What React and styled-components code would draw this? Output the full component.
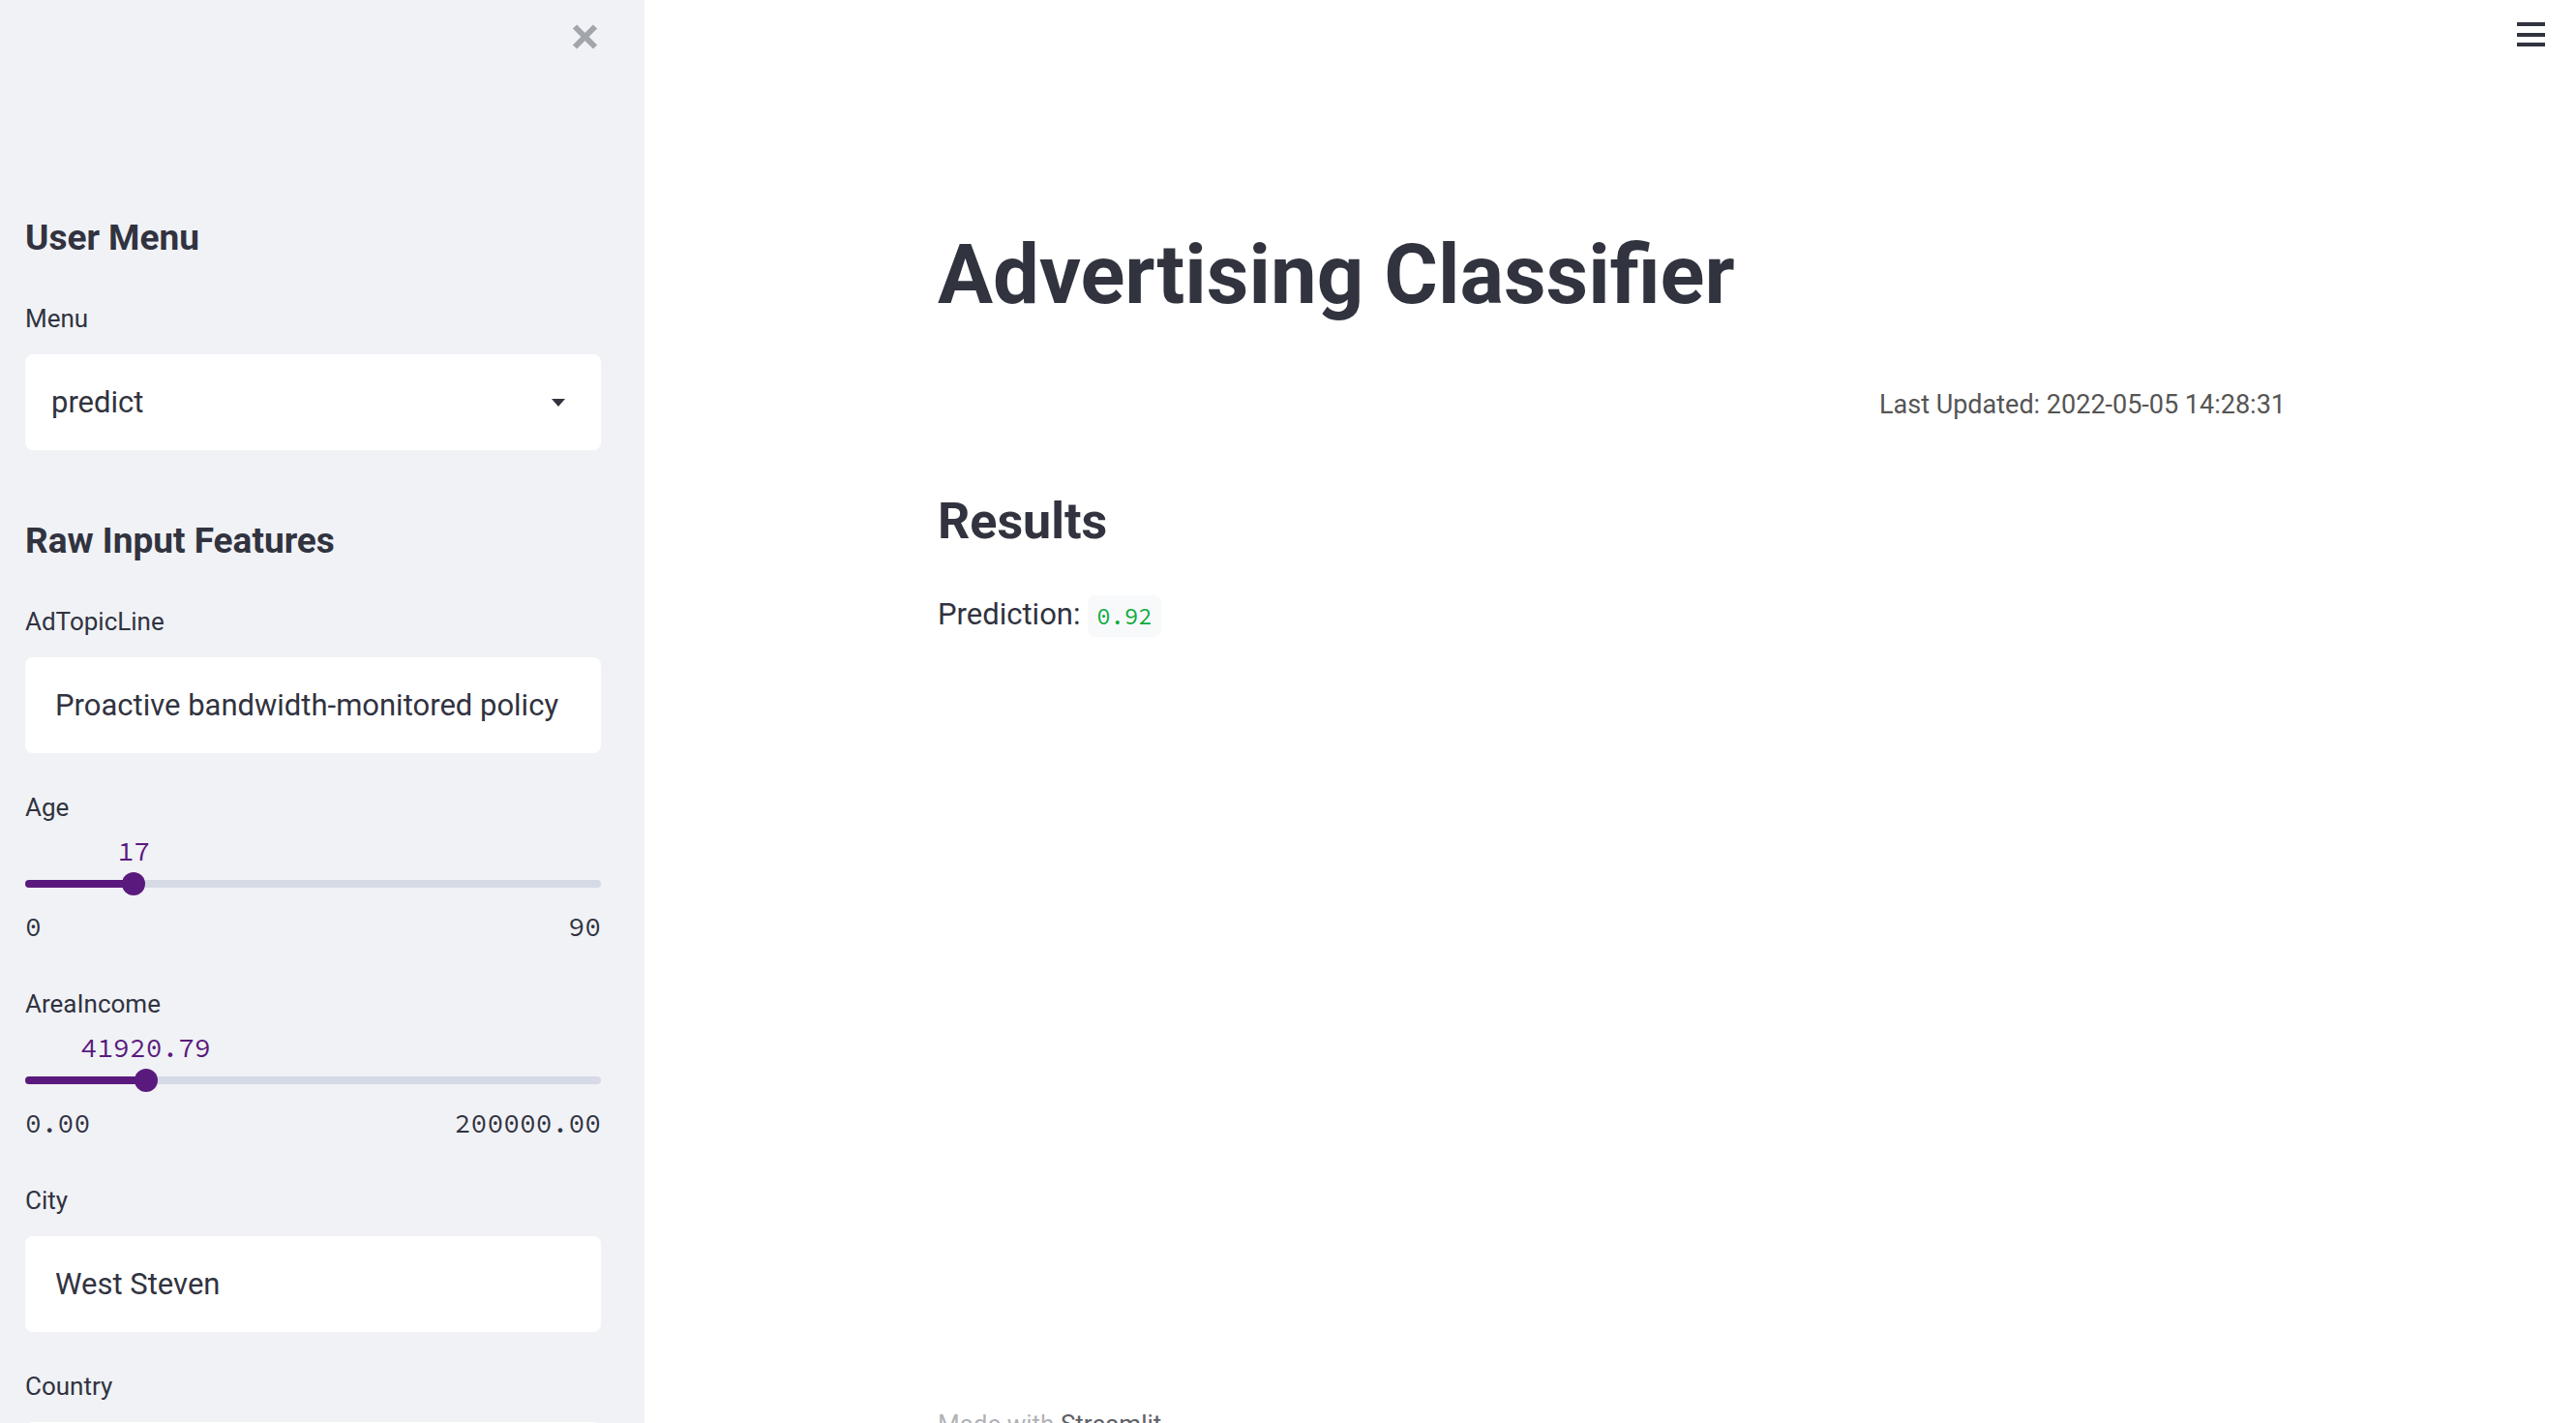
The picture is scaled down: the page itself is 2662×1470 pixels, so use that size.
import React from "react";
import styled, { createGlobalStyle } from "styled-components";

const TEXT = "#31333f";
const PURPLE = "#5a1a7d";
const SANS = `"Source Sans Pro", Roboto, "Noto Sans", sans-serif`;
const MONO = `"Source Code Pro", "DejaVu Sans Mono", "Liberation Mono", monospace`;

const GlobalStyle = createGlobalStyle`
  html, body { margin: 0; padding: 0; }
  body {
    font-family: ${SANS};
    color: ${TEXT};
    background: #ffffff;
  }
  *, *::before, *::after { box-sizing: border-box; }
`;

const Page = styled.div`
  display: flex;
  height: 100vh;
  overflow: hidden;
  background: #ffffff;
`;

/* ---------- Sidebar ---------- */

const Sidebar = styled.aside`
  width: 666px;
  flex-shrink: 0;
  background: #f0f2f6;
  display: flex;
  flex-direction: column;
  padding: 24px 45px 0 26px;
`;

const CloseRow = styled.div`
  display: flex;
  justify-content: flex-end;
  padding-right: 2px;
`;

const CloseButton = styled.button`
  border: 0;
  background: none;
  padding: 0;
  width: 29px;
  height: 28px;
  display: flex;
  cursor: pointer;
`;

const SideHeader = styled.h2`
  margin: ${(p) => p.$gap}px 0 0;
  font-family: ${SANS};
  font-size: 37px;
  line-height: 48px;
  font-weight: 700;
  color: ${TEXT};
`;

const Widget = styled.div`
  margin-top: ${(p) => p.$gap}px;
  display: flex;
  flex-direction: column;
`;

const Label = styled.label`
  font-size: 26px;
  line-height: 36px;
  color: ${TEXT};
  margin-bottom: ${(p) => p.$after}px;
`;

const Field = styled.div`
  height: 99px;
  background: #ffffff;
  border-radius: 8px;
  display: flex;
  align-items: center;
  padding: 0 37px 0 ${(p) => p.$padLeft}px;
  font-size: 31px;
  line-height: 36px;
  color: ${TEXT};
  white-space: nowrap;
  overflow: hidden;
`;

const FieldText = styled.span`
  flex: 1;
`;

const Caret = styled.svg`
  width: 14px;
  height: 8px;
  flex-shrink: 0;
`;

const ValueRow = styled.div`
  position: relative;
  height: 36px;
`;

const ThumbValue = styled.span`
  position: absolute;
  top: 0;
  transform: translateX(-50%);
  font-family: ${MONO};
  font-size: 28px;
  line-height: 36px;
  color: ${PURPLE};
  white-space: nowrap;
`;

const TrackArea = styled.div`
  height: 24px;
  margin-top: 4px;
  display: flex;
  align-items: center;
`;

const Rail = styled.div`
  position: relative;
  flex: 1;
  height: 8px;
  border-radius: 4px;
  background: #d5dae5;
`;

const Fill = styled.div`
  position: absolute;
  left: 0;
  top: 0;
  bottom: 0;
  border-radius: 4px;
  background: ${PURPLE};
`;

const Thumb = styled.div`
  position: absolute;
  top: 50%;
  width: 24px;
  height: 24px;
  border-radius: 50%;
  background: ${PURPLE};
  transform: translate(-50%, -50%);
`;

const MinMaxRow = styled.div`
  margin-top: 14px;
  display: flex;
  justify-content: space-between;
  font-family: ${MONO};
  font-size: 28px;
  line-height: 36px;
  color: ${TEXT};
`;

/* ---------- Main ---------- */

const Main = styled.main`
  flex: 1;
  display: flex;
  flex-direction: column;
  min-width: 0;
`;

const TopBar = styled.div`
  display: flex;
  justify-content: flex-end;
  padding: 23px 32px 0 0;
`;

const MenuButton = styled.button`
  border: 0;
  background: none;
  padding: 0;
  width: 29px;
  height: 25px;
  display: flex;
  cursor: pointer;
`;

const Content = styled.div`
  width: 1396px;
  align-self: center;
  padding-left: 3px;
  display: flex;
  flex-direction: column;
`;

const Title = styled.h1`
  margin: 186px 0 0;
  font-size: 85px;
  line-height: 100px;
  font-weight: 700;
  color: ${TEXT};
`;

const Updated = styled.div`
  margin-top: 66px;
  text-align: right;
  font-family: Roboto, "Liberation Sans", sans-serif;
  font-size: 27px;
  line-height: 36px;
  color: #555555;
`;

const SubHeader = styled.h3`
  margin: 71px 0 0;
  font-size: 52px;
  line-height: 64px;
  font-weight: 700;
  color: ${TEXT};
`;

const Paragraph = styled.p`
  margin: 44px 0 0;
  font-size: 31px;
  line-height: 40px;
  color: ${TEXT};
`;

const Code = styled.code`
  font-family: ${MONO};
  font-size: 24px;
  line-height: 28px;
  color: #09ab3b;
  background: #f8f9fb;
  border-radius: 8px;
  padding: 6px 9px;
`;

const Footer = styled.footer`
  margin-top: 798px;
  font-size: 26px;
  line-height: 36px;
  color: rgba(49, 51, 63, 0.4);
`;

const FooterBrand = styled.span`
  color: #5f6168;
`;

/* ---------- Components ---------- */

function Slider({ label, value, min, max, format, gap }) {
  const pct = ((value - min) / (max - min)) * 100;
  return (
    <Widget $gap={gap}>
      <Label $after={9}>{label}</Label>
      <ValueRow>
        <ThumbValue style={{ left: `${pct}%` }}>{format(value)}</ThumbValue>
      </ValueRow>
      <TrackArea>
        <Rail>
          <Fill style={{ width: `${pct}%` }} />
          <Thumb style={{ left: `${pct}%` }} />
        </Rail>
      </TrackArea>
      <MinMaxRow>
        <span>{format(min)}</span>
        <span>{format(max)}</span>
      </MinMaxRow>
    </Widget>
  );
}

function TextField({ label, value, gap }) {
  return (
    <Widget $gap={gap}>
      <Label $after={19}>{label}</Label>
      <Field $padLeft={31}>
        <FieldText>{value}</FieldText>
      </Field>
    </Widget>
  );
}

export default function App() {
  const fmtInt = (v) => String(v);
  const fmt2 = (v) => v.toFixed(2);
  return (
    <>
      <GlobalStyle />
      <Page>
        <Sidebar>
          <CloseRow>
            <CloseButton aria-label="Close sidebar">
              <svg width="29" height="28" viewBox="0 0 29 28">
                <path
                  d="M4 3.5 L25 24.5 M25 3.5 L4 24.5"
                  stroke="#a3a5ad"
                  strokeWidth="6"
                  fill="none"
                />
              </svg>
            </CloseButton>
          </CloseRow>

          <SideHeader $gap={170}>User Menu</SideHeader>
          <Widget $gap={41}>
            <Label $after={19}>Menu</Label>
            <Field $padLeft={27}>
              <FieldText>predict</FieldText>
              <Caret viewBox="0 0 14 8">
                <path d="M0 0 L14 0 L7 8 Z" fill={TEXT} />
              </Caret>
            </Field>
          </Widget>

          <SideHeader $gap={70}>Raw Input Features</SideHeader>
          <TextField
            gap={41}
            label="AdTopicLine"
            value="Proactive bandwidth-monitored policy"
          />
          <Slider gap={38} label="Age" value={17} min={0} max={90} format={fmtInt} />
          <Slider
            gap={44}
            label="AreaIncome"
            value={41920.79}
            min={0}
            max={200000}
            format={fmt2}
          />
          <TextField gap={44} label="City" value="West Steven" />
          <TextField gap={38} label="Country" value="" />
        </Sidebar>

        <Main>
          <TopBar>
            <MenuButton aria-label="Main menu">
              <svg width="29" height="25" viewBox="0 0 29 25">
                <rect x="0" y="0" width="29" height="4" fill={TEXT} />
                <rect x="0" y="11" width="29" height="4" fill={TEXT} />
                <rect x="0" y="21" width="29" height="4" fill={TEXT} />
              </svg>
            </MenuButton>
          </TopBar>
          <Content>
            <Title>Advertising Classifier</Title>
            <Updated>Last Updated: 2022-05-05 14:28:31</Updated>
            <SubHeader>Results</SubHeader>
            <Paragraph>
              Prediction: <Code>0.92</Code>
            </Paragraph>
            <Footer>
              Made with <FooterBrand>Streamlit</FooterBrand>
            </Footer>
          </Content>
        </Main>
      </Page>
    </>
  );
}
